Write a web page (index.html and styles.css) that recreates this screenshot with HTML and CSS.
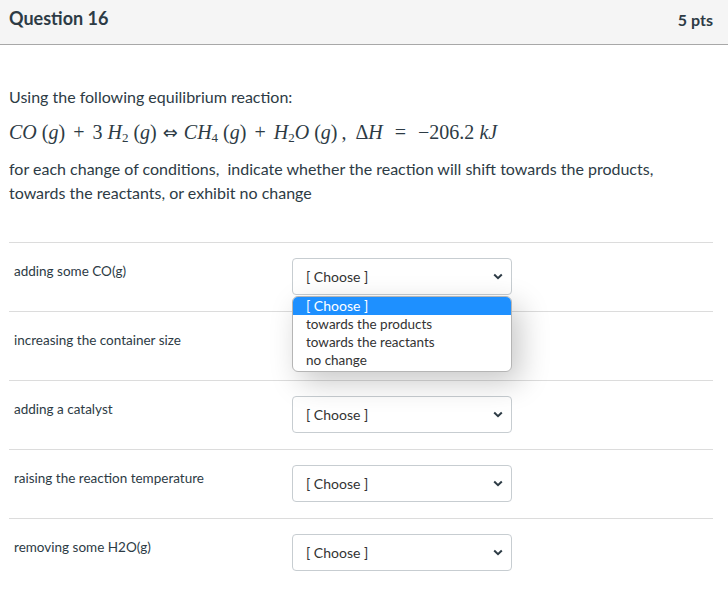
FILE: index.html
```html
<!DOCTYPE html>
<html>
<head>
<meta charset="utf-8">
<link rel="stylesheet" href="styles.css">
</head>
<body>
<div class="question">
  <div class="header">
    <h2 class="title">Question 16</h2>
    <div class="pts">5 pts</div>
  </div>
  <div class="content">
    <p class="intro">Using the following equilibrium reaction:</p>
    <p class="math"><span class="i">CO</span><span class="sp"></span>(<span class="i">g</span>)<span class="op">+</span>3<span class="sp"></span><span class="i">H</span><sub>2</sub><span class="sp"></span>(<span class="i">g</span>)<span class="op arrow">⇔</span><span class="i">CH</span><sub>4</sub><span class="sp"></span>(<span class="i">g</span>)<span class="op">+</span><span class="i">H</span><sub>2</sub><span class="i">O</span><span class="sp"></span>(<span class="i">g</span>)<span class="sp2"></span>,<span class="sp3"></span>Δ<span class="i">H</span><span class="op eq">=</span>−206.2<span class="sp"></span><span class="i">kJ</span></p>
    <p class="desc">for each change of conditions,&nbsp; indicate whether the reaction will shift towards the products, towards the reactants, or exhibit no change</p>
  </div>
  <div class="rows">
    <div class="row">
      <div class="label">adding some CO(g)</div>
      <div class="selwrap">
        <div class="select"><span>[ Choose ]</span><svg class="chev" width="10" height="7" viewBox="0 0 10 7"><path d="M1.2 1.5 L5 5.2 L8.8 1.5" fill="none" stroke="#2d3b45" stroke-width="2"/></svg></div>
        <ul class="menu">
          <li class="sel">[ Choose ]</li>
          <li>towards the products</li>
          <li>towards the reactants</li>
          <li>no change</li>
        </ul>
      </div>
    </div>
    <div class="row">
      <div class="label">increasing the container size</div>
      <div class="selwrap"></div>
    </div>
    <div class="row">
      <div class="label">adding a catalyst</div>
      <div class="selwrap"><div class="select"><span>[ Choose ]</span><svg class="chev" width="10" height="7" viewBox="0 0 10 7"><path d="M1.2 1.5 L5 5.2 L8.8 1.5" fill="none" stroke="#2d3b45" stroke-width="2"/></svg></div></div>
    </div>
    <div class="row">
      <div class="label">raising the reaction temperature</div>
      <div class="selwrap"><div class="select"><span>[ Choose ]</span><svg class="chev" width="10" height="7" viewBox="0 0 10 7"><path d="M1.2 1.5 L5 5.2 L8.8 1.5" fill="none" stroke="#2d3b45" stroke-width="2"/></svg></div></div>
    </div>
    <div class="row">
      <div class="label">removing some H2O(g)</div>
      <div class="selwrap"><div class="select"><span>[ Choose ]</span><svg class="chev" width="10" height="7" viewBox="0 0 10 7"><path d="M1.2 1.5 L5 5.2 L8.8 1.5" fill="none" stroke="#2d3b45" stroke-width="2"/></svg></div></div>
    </div>
  </div>
</div>
</body>
</html>
```
FILE: styles.css
```css
html, body {
  margin: 0;
  padding: 0;
  background: #fff;
}
body {
  font-family: Lato, "Open Sans", sans-serif;
  color: #2d3b45;
}
.header {
  height: 44px;
  background: #f5f5f5;
  border-bottom: 1px solid #a8a8a8;
  display: flex;
  align-items: center;
  justify-content: space-between;
  padding: 0 15px 0 9px;
}
.title {
  margin: 0;
  font-size: 18px;
  font-weight: 700;
  position: relative;
  top: -4px;
}
.pts {
  font-size: 16px;
  font-weight: 700;
  position: relative;
  top: -3px;
}
.content {
  padding: 40px 9px 0 9px;
}
.content p {
  margin: 0;
  font-size: 16px;
  line-height: 24px;
}
.intro {
  margin-bottom: 11px !important;
}
.math {
  font-family: "Liberation Serif", "DejaVu Serif", serif;
  font-size: 20px !important;
  line-height: 24px;
  margin-bottom: 12px !important;
  white-space: nowrap;
}
.math .i { font-style: italic; }
.math sub { font-size: 13px; vertical-align: -3px; line-height: 0; }
.math .sp { display: inline-block; width: 5px; }
.math .sp2 { display: inline-block; width: 4px; }
.math .sp3 { display: inline-block; width: 9px; }
.math .op { display: inline-block; margin: 0 8px; }
.math .arrow { font-family: "DejaVu Sans", sans-serif; font-size: 18px; margin: 0 6px; }
.math .eq { margin: 0 12px; }
.desc {
  max-width: 660px;
}
.rows {
  margin: 37px 15px 0 9px;
}
.row {
  border-top: 1px solid #dcdcdc;
  height: 68px;
  display: flex;
}
.label {
  width: 283px;
  padding: 19px 0 0 5px;
  font-size: 13.5px;
  line-height: 18px;
  box-sizing: border-box;
}
.selwrap {
  position: relative;
  padding-top: 15px;
}
.select {
  width: 220px;
  height: 37px;
  box-sizing: border-box;
  border: 1px solid #c7cdd1;
  border-radius: 4px;
  display: flex;
  align-items: center;
  justify-content: space-between;
  padding: 0 8px 0 13px;
  font-size: 14px;
  color: #333;
  background: #fff;
}
.chev { display: block; }
.menu {
  position: absolute;
  left: 0;
  top: 53px;
  width: 220px;
  box-sizing: border-box;
  margin: 0;
  padding: 0 0 2px 0;
  list-style: none;
  background: #fff;
  border: 1px solid #b5b5b5;
  border-radius: 6px;
  overflow: hidden;
  box-shadow: 8px 10px 30px rgba(0,0,0,0.22);
  z-index: 5;
  font-size: 13.5px;
  color: #333;
}
.menu li {
  height: 18px;
  line-height: 18px;
  padding-left: 13px;
}
.menu li.sel {
  background: #1e90ff;
  color: #fff;
  font-size: 14px;
}
```
